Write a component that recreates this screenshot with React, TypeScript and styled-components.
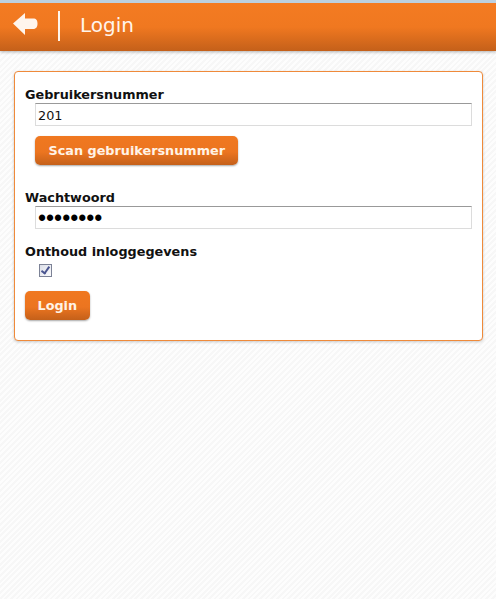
import React from 'react';
import styled, { createGlobalStyle } from 'styled-components';

const App: React.FunctionComponent = () => {
	return (
		<>
			<GlobalStyle />
			<Header>
				<BackIcon viewBox='0 0 26 24'>
					<path d='M13 1 L1 11.5 L13 23 L13 17 L21 17 C24.5 17 25.5 14.5 25.5 11.5 C25.5 8.5 24.5 6.5 21 6.5 L13 6.5 Z' fill='#fff5ec' />
				</BackIcon>
				<Divider />
				<Title>Login</Title>
			</Header>
			<Card>
				<Label>Gebruikersnummer</Label>
				<TextInput type='text' defaultValue='201' />
				<ScanRow>
					<OrangeButton $padding={13.5}>Scan gebruikersnummer</OrangeButton>
				</ScanRow>
				<Label>Wachtwoord</Label>
				<PasswordInput type='password' defaultValue='12345678' />
				<RememberLabel>Onthoud inloggegevens</RememberLabel>
				<Check type='checkbox' defaultChecked />
				<OrangeButton $padding={12.5}>Login</OrangeButton>
			</Card>
		</>
	);
};

const GlobalStyle = createGlobalStyle`
	html, body {
		margin: 0;
		padding: 0;
		height: 100%;
		overflow: hidden;
	}
	body {
		font-family: 'DejaVu Sans', Verdana, sans-serif;
		background: repeating-linear-gradient(-45deg, #fdfdfd 0 2px, #f7f7f7 2px 4px);
	}
`;
const Header = styled.header`
	height: 44px;
	padding-bottom: 4px;
	border-top: 3px solid #bcd0e0;
	display: flex;
	align-items: center;
	background: linear-gradient(#f47b22 0%, #f07820 50%, #c4601a 100%);
	box-shadow: 0 1px 3px rgba(0, 0, 0, 0.3);
`;
const BackIcon = styled.svg`
	width: 26px;
	height: 24px;
	margin: -2px 0 0 12px;
`;
const Divider = styled.div`
	width: 2px;
	height: 30px;
	margin: 2px 0 0 20px;
	background: #fff5ec;
`;
const Title = styled.h1`
	margin: 0 0 0 20px;
	font-size: 20px;
	font-weight: 400;
	color: #fff5ec;
`;
const Card = styled.main`
	margin: 20px 13px 0 14px;
	padding: 15px 10px 20px;
	height: 270px;
	box-sizing: border-box;
	background: #fff;
	border: 1px solid #ef8a3a;
	border-radius: 4px;
	box-shadow: 0 1px 3px rgba(0, 0, 0, 0.2);
`;
const Label = styled.label`
	display: block;
	height: 16px;
	font-size: 12.8px;
	line-height: 16px;
	font-weight: 700;
	color: #111;
`;
const RememberLabel = styled(Label)`
	margin-top: 15px;
`;
const TextInput = styled.input`
	display: block;
	box-sizing: border-box;
	width: 437px;
	height: 23px;
	margin-left: 10px;
	padding: 1px 2px 0;
	border: 1px solid #dcdcdc;
	border-top-color: #999;
	font-family: inherit;
	font-size: 12.8px;
	color: #111;
	outline: none;
`;
const PasswordInput = styled(TextInput)`
	font-family: 'Liberation Sans', Arial, sans-serif;
	font-size: 23px;
	color: #000;
`;
const ScanRow = styled.div`
	margin: 10px 0 25px 10px;
`;
const OrangeButton = styled.button<{ $padding: number }>`
	display: block;
	height: 29px;
	padding: 0 ${(p) => p.$padding}px;
	border: none;
	border-radius: 5px;
	background: linear-gradient(#f07820 0%, #ec7520 55%, #c4601a 100%);
	box-shadow: 0 1px 2px rgba(0, 0, 0, 0.35);
	font-family: inherit;
	font-size: 12.8px;
	font-weight: 700;
	color: #fff3e6;
`;
const Check = styled.input`
	appearance: none;
	position: relative;
	display: block;
	box-sizing: border-box;
	width: 13px;
	height: 13px;
	margin: 4px 0 14px 14px;
	border: 1px solid #7c8296;
	background: linear-gradient(135deg, #dcdfe8, #fbfbfd);

	&:checked::after {
		content: '';
		position: absolute;
		left: 3px;
		top: 0;
		width: 3px;
		height: 7px;
		border: solid #4a5590;
		border-width: 0 2px 2px 0;
		transform: rotate(35deg);
	}
`;

export default App;
